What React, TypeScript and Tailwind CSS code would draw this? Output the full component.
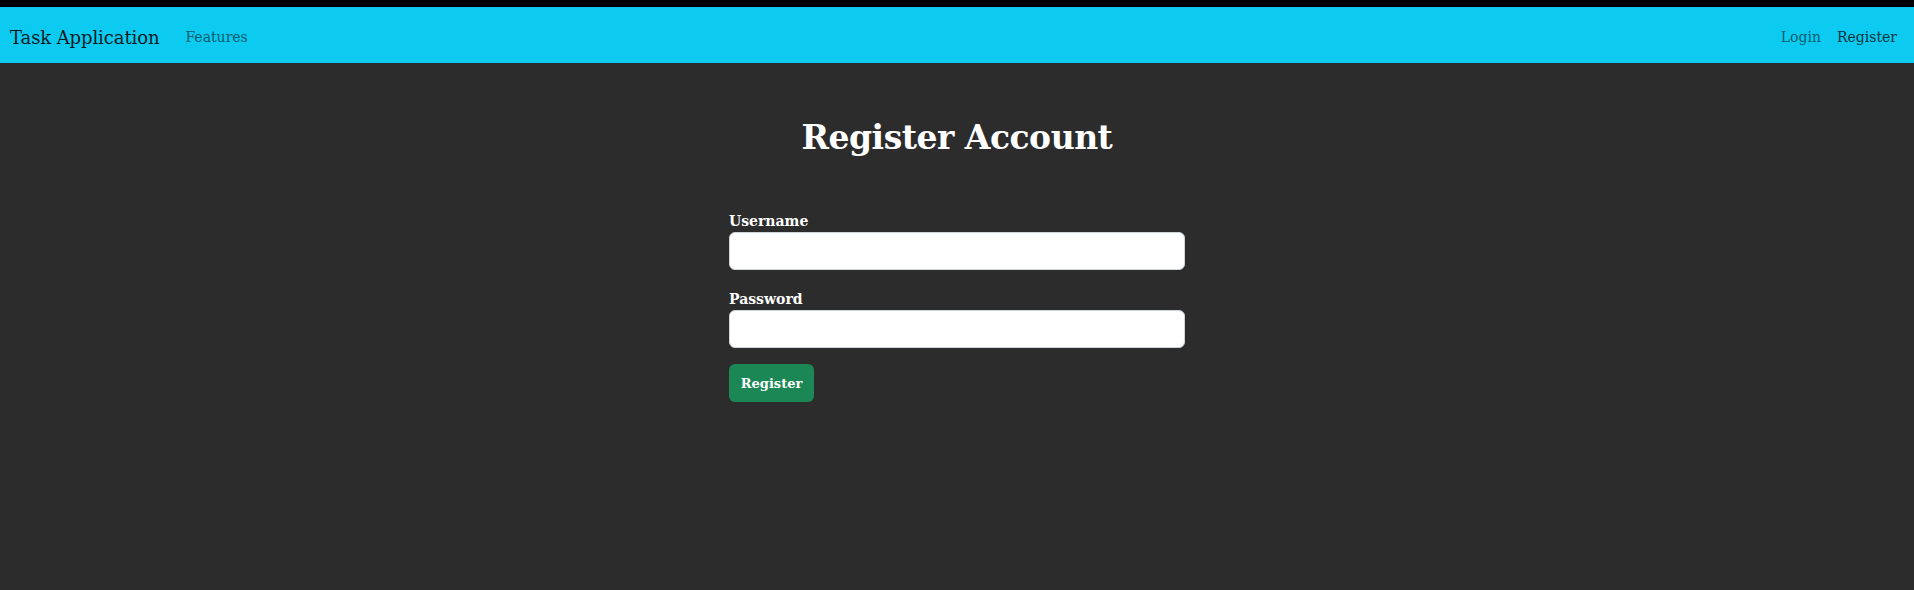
import React from "react";

export default function App() {
  const font = { fontFamily: '"DejaVu Serif", "Liberation Serif", serif' };
  return (
    <div className="min-h-[590px] bg-[#2c2c2c] border-t-[7px] border-black" style={font}>
      <nav className="h-[56px] bg-[#0dcaf0] flex items-center justify-between pt-[5px] pl-[10px] pr-[17px]">
        <div className="flex items-center">
          <span className="text-[18px] text-[#031a1f] tracking-[-0.1px]">Task Application</span>
          <span className="ml-[26px] text-[14px] text-[#075d6e]">Features</span>
        </div>
        <div className="flex items-center gap-[16px] text-[14px]">
          <span className="text-[#075d6e]">Login</span>
          <span className="text-[#06333d]">Register</span>
        </div>
      </nav>
      <main className="flex flex-col items-center">
        <h1 className="mt-[51px] text-[33px] leading-[48px] font-bold text-white tracking-[-0.5px]">Register Account</h1>
        <form className="w-[456px] mt-[48px] flex flex-col">
          <label className="text-[14px] leading-[22px] font-bold text-white">Username</label>
          <input className="h-[38px] bg-white rounded-[6px] border border-[#ced4da] outline-none" />
          <label className="mt-[18px] text-[14px] leading-[22px] font-bold text-white">Password</label>
          <input type="password" className="h-[38px] bg-white rounded-[6px] border border-[#ced4da] outline-none" />
          <button type="button" className="mt-[16px] w-[85px] h-[38px] pt-[2px] rounded-[6px] bg-[#1a8755] text-white text-[13px] font-bold">Register</button>
        </form>
      </main>
    </div>
  );
}
